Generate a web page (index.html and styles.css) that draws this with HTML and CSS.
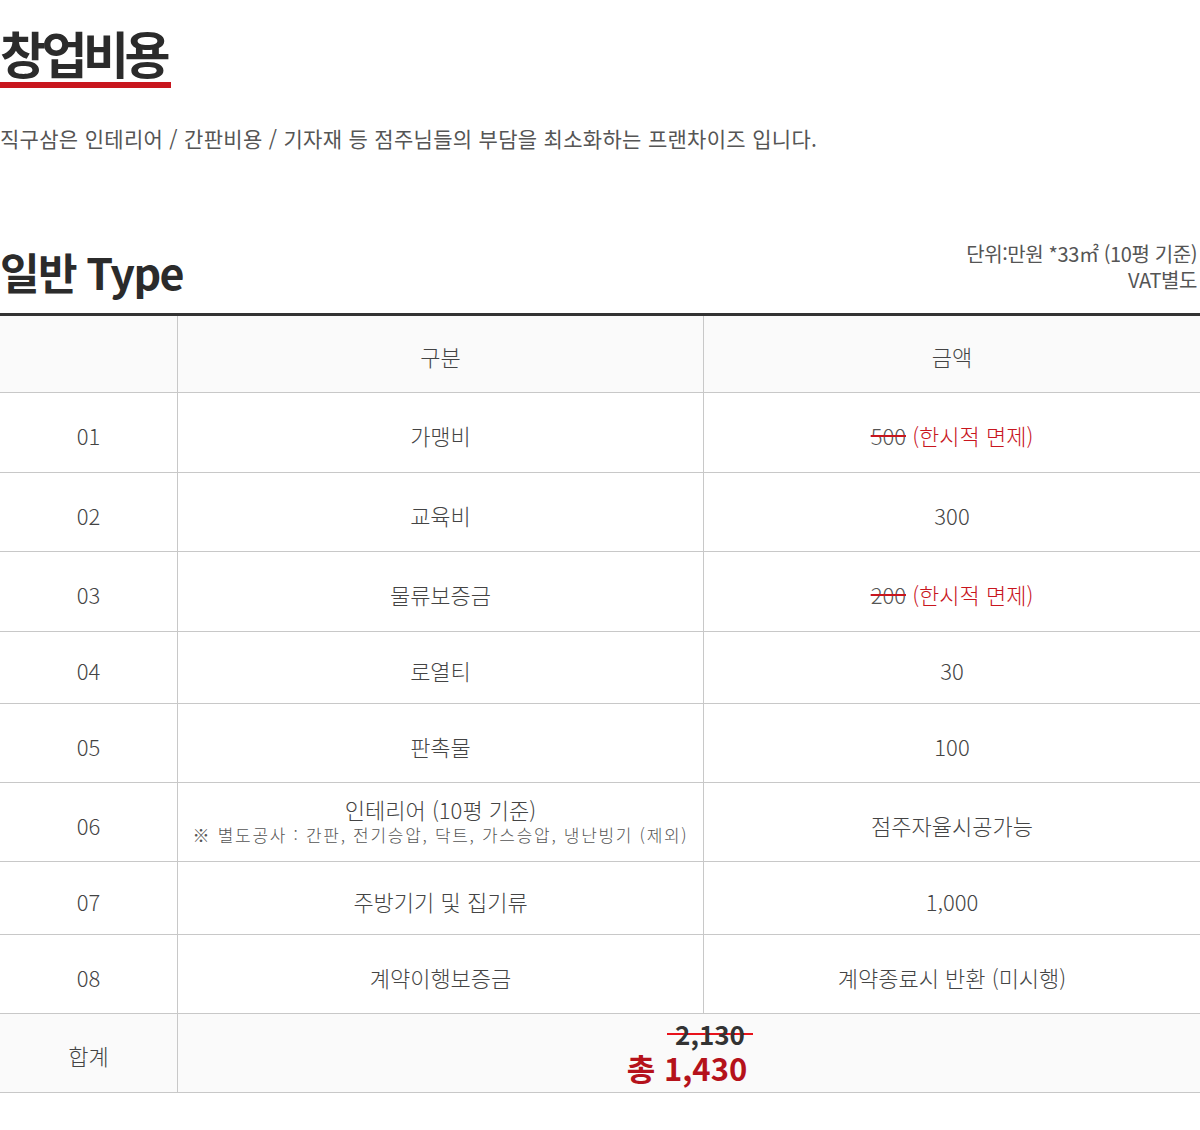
FILE: index.html
```html
<!DOCTYPE html>
<html lang="ko">
<head>
<meta charset="utf-8">
<title>창업비용</title>
<link rel="stylesheet" href="styles.css">
</head>
<body>
<section class="cost">
  <h2 class="title">창업비용</h2>
  <p class="lead">직구삼은 인테리어 / 간판비용 / 기자재 등 점주님들의 부담을 최소화하는 프랜차이즈 입니다.</p>

  <div class="type-head">
    <h3 class="type-title">일반 Type</h3>
    <div class="unit"><div>단위:만원 *33㎡ (10평 기준)</div><div>VAT별도</div></div>
  </div>

  <table class="table">
    <thead>
      <tr>
        <th class="c-no"></th>
        <th class="c-name">구분</th>
        <th class="c-price">금액</th>
      </tr>
    </thead>
    <tbody>
      <tr class="r-tall">
        <td>01</td><td>가맹비</td>
        <td><span class="strike">500</span> <span class="free">(한시적 면제)</span></td>
      </tr>
      <tr>
        <td>02</td><td>교육비</td><td>300</td>
      </tr>
      <tr class="r-tall">
        <td>03</td><td>물류보증금</td>
        <td><span class="strike">200</span> <span class="free">(한시적 면제)</span></td>
      </tr>
      <tr class="r-short">
        <td>04</td><td>로열티</td><td>30</td>
      </tr>
      <tr>
        <td>05</td><td>판촉물</td><td>100</td>
      </tr>
      <tr>
        <td>06</td>
        <td><div class="two">인테리어 (10평 기준)</div><div class="note">※ 별도공사 : 간판, 전기승압, 닥트, 가스승압, 냉난빙기 (제외)</div></td>
        <td>점주자율시공가능</td>
      </tr>
      <tr class="r-short2">
        <td>07</td><td>주방기기 및 집기류</td><td>1,000</td>
      </tr>
      <tr>
        <td>08</td><td>계약이행보증금</td><td>계약종료시 반환 (미시행)</td>
      </tr>
    </tbody>
    <tfoot>
      <tr>
        <td class="sum-label">합계</td>
        <td class="sum-value" colspan="2">
          <div class="old-total"><span>2,130</span></div>
          <div class="new-total">총 1,430</div>
        </td>
      </tr>
    </tfoot>
  </table>
</section>
</body>
</html>
```

FILE: styles.css
```css
html, body {
  margin: 0;
  padding: 0;
  background: #fff;
}

body {
  font-family: "Noto Sans CJK KR", "Noto Sans", sans-serif;
  color: #444;
}

.cost {
  width: 1200px;
  padding-top: 22px;
}

.title {
  display: inline-block;
  margin: 0;
  font-size: 50px;
  font-weight: 700;
  line-height: 60px;
  letter-spacing: -4.5px;
  color: #2b2b2b;
  border-bottom: 6px solid #c8161e;
  padding-right: 5px;
}

.lead {
  margin: 36px 0 0;
  font-size: 21px;
  font-weight: 400;
  line-height: 28px;
  color: #555;
  letter-spacing: 0.3px;
}

.type-head {
  display: flex;
  justify-content: space-between;
  align-items: flex-end;
  margin-top: 89px;
  padding-bottom: 16px;
}

.type-title {
  margin: 0;
  font-size: 43px;
  font-weight: 700;
  line-height: 52px;
  letter-spacing: -1.6px;
  color: #2b2b2b;
}

.unit {
  text-align: right;
  font-size: 20px;
  line-height: 26px;
  color: #555;
  letter-spacing: -0.4px;
  padding-right: 3px;
  padding-bottom: 4px;
}

.table {
  width: 1200px;
  border-collapse: collapse;
  border-top: 3px solid #333;
  table-layout: fixed;
}

.table th,
.table td {
  border-bottom: 1px solid #c8c8c8;
  border-left: 1px solid #c8c8c8;
  text-align: center;
  vertical-align: middle;
  font-size: 22px;
  font-weight: 300;
  color: #444;
  padding: 0;
  height: 73px;
}

.table th:first-child,
.table td:first-child {
  border-left: none;
}

.c-no { width: 177px; }
.c-name { width: 525px; }

.table thead th {
  background: #fafafa;
  height: 73px;
  padding-top: 3px;
}

.table tbody td {
  padding-top: 5px;
}

.table tbody .r-tall td { height: 74px; }
.table tbody .r-short td { height: 66px; }
.table tbody .r-short2 td { height: 67px; }

.strike {
  color: #555;
  text-decoration: line-through;
  text-decoration-color: #c8161e;
  text-decoration-thickness: 2px;
}

.free {
  color: #c8161e;
}

.two {
  line-height: 26px;
  margin-top: -8px;
}

.note {
  font-size: 17px;
  line-height: 22px;
  letter-spacing: 1.7px;
  color: #555;
  margin-top: 2px;
}

.table tfoot td {
  background: #fafafa;
  height: 78px;
}

.table tfoot .sum-label {
  height: 75px;
  padding-top: 3px;
}

.sum-value {
  line-height: 1;
}

.old-total span {
  display: inline-block;
  font-size: 26px;
  font-weight: 700;
  color: #333;
  line-height: 28px;
  padding: 0 8px;
  margin-left: 42px;
  background: linear-gradient(to bottom, transparent 47%, #e8121b 47%, #e8121b 54%, transparent 54%);
}

.new-total {
  font-size: 31px;
  font-weight: 700;
  color: #b5121b;
  line-height: 36px;
  margin-top: 2px;
  margin-left: -4px;
}
```
